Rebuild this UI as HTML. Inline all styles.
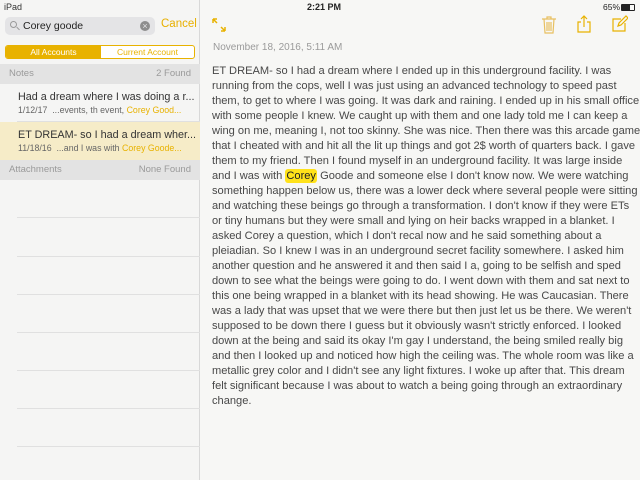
<!DOCTYPE html>
<html><head><meta charset="utf-8"><style>
*{margin:0;padding:0;box-sizing:border-box}
html,body{width:640px;height:480px;overflow:hidden}
body{background:#f7f7f5;font-family:"Liberation Sans",sans-serif;position:relative}
.abs{position:absolute}
#left{left:0;top:0;width:200px;height:480px;background:#f5f5f4;border-right:1px solid #d8d8d8}
.band{position:absolute;left:0;width:200px;height:20px;background:#e3e3e3;font-size:9.5px;color:#9a9a9a;line-height:20px;padding:0 9px}
.band span{float:right}
.sep{position:absolute;left:17px;width:183px;height:1px;background:#e0e0e0}
.row{position:absolute;left:0;width:200px;height:38px;padding:6px 0 0 18px;white-space:nowrap;overflow:hidden}
.t{font-size:10.8px;color:#333;line-height:14px}
.s{font-size:8.8px;color:#666;line-height:13px}
.y{color:#e8b200}
#note div{white-space:nowrap;height:15px;line-height:15px}
</style></head><body>
<div id="left" class="abs">
<div class="abs" style="left:4px;top:2px;font-size:9px;color:#333">iPad</div>
<div class="abs" style="left:5px;top:17px;width:150px;height:18px;background:#e4e4e6;border-radius:5px"></div>
<div class="abs" style="left:10px;top:21px;width:7px;height:7px;border:1.2px solid #999;border-radius:50%"></div>
<div class="abs" style="left:16px;top:28px;width:4px;height:1.3px;background:#999;transform:rotate(45deg)"></div>
<div class="abs" style="left:23px;top:20px;font-size:10.5px;color:#222">Corey goode</div>
<div class="abs" style="left:140px;top:21px;width:10px;height:10px;border-radius:50%;background:#8e8e8e;color:#e4e4e6;font-size:9px;line-height:10px;text-align:center">×</div>
<div class="abs" style="left:161px;top:18px;font-size:11.5px;color:#e8b000">Cancel</div>
<div class="abs" style="left:5px;top:45px;width:190px;height:14px;border:1px solid #e8b200;border-radius:3px;background:#fff;overflow:hidden">
<div class="abs" style="left:0;top:0;width:95px;height:12px;background:#e8b200;color:#fff;font-size:8.5px;text-align:center;line-height:12px">All Accounts</div>
<div class="abs" style="left:95px;top:0;width:93px;height:12px;color:#e8b200;font-size:8.5px;text-align:center;line-height:12px">Current Account</div>
</div>
<div class="band" style="top:64px">Notes<span>2 Found</span></div>
<div class="row" style="top:84px"><div class="t">Had a dream where I was doing a r...</div><div class="s">1/12/17&nbsp; ...events, th event, <span class="y">Corey Good...</span></div></div>
<div class="sep" style="top:121px"></div>
<div class="row" style="top:122px;background:#f6ecc8"><div class="t">ET DREAM- so I had a dream wher...</div><div class="s">11/18/16&nbsp; ...and I was with <span class="y">Corey Goode...</span></div></div>
<div class="band" style="top:160px">Attachments<span>None Found</span></div>
<div class="sep" style="top:217px"></div><div class="sep" style="top:256px"></div><div class="sep" style="top:294px"></div><div class="sep" style="top:332px"></div><div class="sep" style="top:370px"></div><div class="sep" style="top:408px"></div><div class="sep" style="top:446px"></div>
</div>
<div class="abs" style="left:307px;top:2px;font-size:9px;font-weight:bold;color:#222">2:21 PM</div>
<div class="abs" style="left:603px;top:2px;font-size:8.5px;color:#222">65%</div>
<div class="abs" style="left:621px;top:4px;width:14px;height:7px;border:1px solid #222;border-radius:1px"><div style="width:8px;height:5px;background:#222"></div></div>
<svg class="abs" style="left:211px;top:17px" width="16" height="16" viewBox="0 0 16 16" fill="none" stroke="#e8b200" stroke-width="1.5"><path d="M2 2l4 4M2 2h4M2 2v4M14 14l-4-4M14 14h-4M14 14v-4"/></svg>
<svg class="abs" style="left:541px;top:16px" width="16" height="18" viewBox="0 0 16 18" fill="none" stroke="#e8c060" stroke-width="1.2"><path d="M1 3h14M6 3V1h4v2M3 3l1 14h8l1-14M6 6v9M8 6v9M10 6v9"/></svg>
<svg class="abs" style="left:577px;top:15px" width="14" height="18" viewBox="0 0 14 18" fill="none" stroke="#e8b200" stroke-width="1.2"><path d="M4 7H1v10h12V7h-3M7 12V1M4 4l3-3 3 3"/></svg>
<svg class="abs" style="left:612px;top:15px" width="16" height="17" viewBox="0 0 16 17" fill="none" stroke="#e8b200" stroke-width="1.2"><path d="M9 4H1v12h12V8M6 11l1-3 7-7 2 2-7 7z"/></svg>
<div class="abs" style="left:213px;top:42px;font-size:10px;color:#9a9a9a">November 18, 2016, 5:11 AM</div>
<div id="note" class="abs" style="left:212px;top:64px;font-size:11.1px;color:#484848">
<div>ET DREAM- so I had a dream where I ended up in this underground facility. I was</div>
<div>running from the cops, well I was just using an advanced technology to speed past</div>
<div>them, to get to where I was going. It was dark and raining. I ended up in his small office</div>
<div>with some people I knew. We caught up with them and one lady told me I can keep a</div>
<div>wing on me, meaning I, not too skinny. She was nice. Then there was this arcade game</div>
<div>that I cheated with and hit all the lit up things and got 2$ worth of quarters back. I gave</div>
<div>them to my friend. Then I found myself in an underground facility. It was large inside</div>
<div>and I was with <span style="background:#ffe21a;border-radius:3px;padding:1px 1px;color:#222">Corey</span> Goode and someone else I don't know now. We were watching</div>
<div>something happen below us, there was a lower deck where several people were sitting</div>
<div>and watching these beings go through a transformation. I don't know if they were ETs</div>
<div>or tiny humans but they were small and lying on heir backs wrapped in a blanket. I</div>
<div>asked Corey a question, which I don't recal now and he said something about a</div>
<div>pleiadian. So I knew I was in an underground secret facility somewhere. I asked him</div>
<div>another question and he answered it and then said I a, going to be selfish and sped</div>
<div>down to see what the beings were going to do. I went down with them and sat next to</div>
<div>this one being wrapped in a blanket with its head showing. He was Caucasian. There</div>
<div>was a lady that was upset that we were there but then just let us be there. We weren't</div>
<div>supposed to be down there I guess but it obviously wasn't strictly enforced. I looked</div>
<div>down at the being and said its okay I'm gay I understand, the being smiled really big</div>
<div>and then I looked up and noticed how high the ceiling was. The whole room was like a</div>
<div>metallic grey color and I didn't see any light fixtures. I woke up after that. This dream</div>
<div>felt significant because I was about to watch a being going through an extraordinary</div>
<div>change.</div>
</div>
</body></html>
